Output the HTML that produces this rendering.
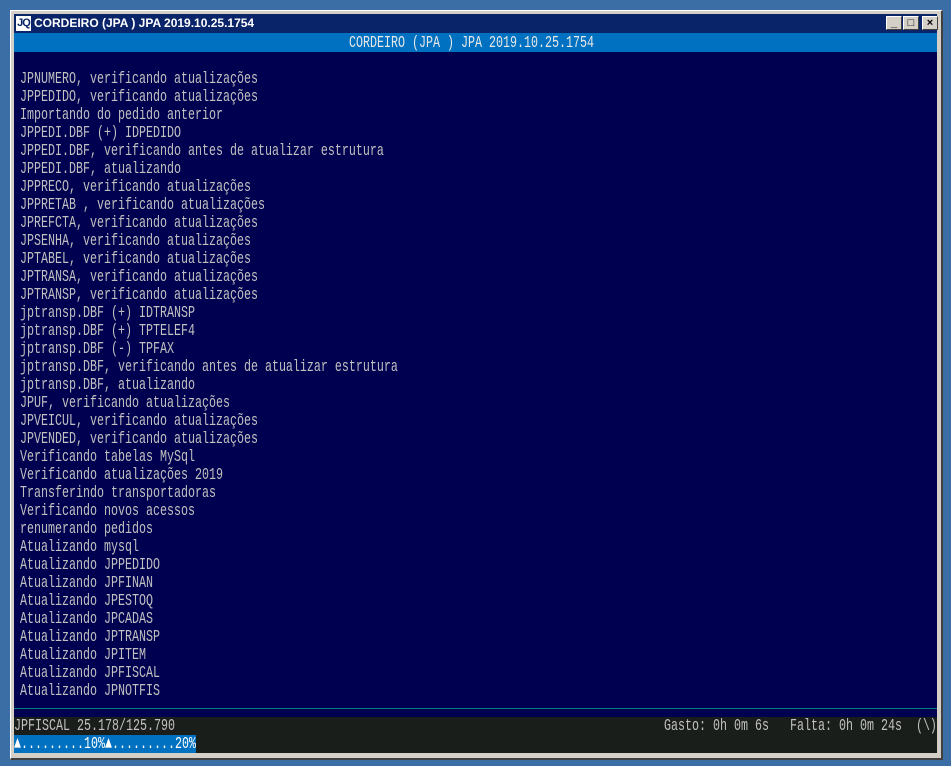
<!DOCTYPE html>
<html><head><meta charset="utf-8"><style>
*{margin:0;padding:0;box-sizing:border-box}
body{width:951px;height:766px;background:#3a6ea5;position:relative;overflow:hidden;font-family:"Liberation Mono",monospace}
.win{position:absolute;left:10px;top:10px;width:933px;height:750px;background:#d4d0c8;border-top:1px solid #fff;border-left:1px solid #fff;border-right:2px solid #404040;border-bottom:2px solid #404040}
.title{position:absolute;left:14px;top:14px;width:923px;height:19px;background:#0a246a;color:#fff;font:bold 12px "Liberation Sans",sans-serif;line-height:19px}
.logo{position:absolute;left:2px;top:2px;width:15px;height:15px;background:#fff;color:#0a246a;font:bold 11px "Liberation Sans",sans-serif;line-height:15px;text-align:center;letter-spacing:-1px}
.tt{position:absolute;left:20px;top:0}
.btn{position:absolute;top:2px;width:16px;height:14px;background:#d4d0c8;border-top:1px solid #fff;border-left:1px solid #fff;border-right:1px solid #404040;border-bottom:1px solid #404040;color:#000;font:bold 11px "Liberation Sans",sans-serif;text-align:center;line-height:12px}
.hdr{position:absolute;left:14px;top:33px;width:923px;height:19px;background:#0070c0;color:#e0e0e0;text-align:center}
.main{position:absolute;left:14px;top:52px;width:923px;height:665px;background:#000050}
.line{position:absolute;left:0;top:656px;width:923px;height:1px;background:#008080}
.t{white-space:pre;color:#c0c0c0;font-size:17px;line-height:18px;transform:scaleX(0.686);transform-origin:0 0;display:block}
.txt{position:absolute;left:20px;top:71px}
.st{position:absolute;left:14px;top:717px;width:923px;height:36px;background:#1a1e1a}
.prog{position:absolute;left:0;top:18px;width:182px;height:18px;background:#0070c0}
</style></head><body>
<div class="win"></div>
<div class="title"><div class="logo">JQ</div><span class="tt">CORDEIRO (JPA ) JPA 2019.10.25.1754</span>
<div class="btn" style="left:872px">_</div><div class="btn" style="left:889px">□</div><div class="btn" style="left:906px;margin-left:2px">×</div></div>
<div class="hdr"><span class="t" style="position:absolute;left:335px;top:2px;color:#e8e8e8">CORDEIRO (JPA ) JPA 2019.10.25.1754</span></div>
<div class="main"><div class="line"></div></div>
<div class="txt"><span class="t">JPNUMERO, verificando atualizações
JPPEDIDO, verificando atualizações
Importando do pedido anterior
JPPEDI.DBF (+) IDPEDIDO
JPPEDI.DBF, verificando antes de atualizar estrutura
JPPEDI.DBF, atualizando
JPPRECO, verificando atualizações
JPPRETAB , verificando atualizações
JPREFCTA, verificando atualizações
JPSENHA, verificando atualizações
JPTABEL, verificando atualizações
JPTRANSA, verificando atualizações
JPTRANSP, verificando atualizações
jptransp.DBF (+) IDTRANSP
jptransp.DBF (+) TPTELEF4
jptransp.DBF (-) TPFAX
jptransp.DBF, verificando antes de atualizar estrutura
jptransp.DBF, atualizando
JPUF, verificando atualizações
JPVEICUL, verificando atualizações
JPVENDED, verificando atualizações
Verificando tabelas MySql
Verificando atualizações 2019
Transferindo transportadoras
Verificando novos acessos
renumerando pedidos
Atualizando mysql
Atualizando JPPEDIDO
Atualizando JPFINAN
Atualizando JPESTOQ
Atualizando JPCADAS
Atualizando JPTRANSP
Atualizando JPITEM
Atualizando JPFISCAL
Atualizando JPNOTFIS</span></div>
<div class="st"><div class="prog"></div>
<span class="t" style="position:absolute;left:0;top:1px">JPFISCAL 25.178/125.790</span>
<span class="t" style="position:absolute;left:650px;top:1px">Gasto: 0h 0m 6s   Falta: 0h 0m 24s  (\)</span>
<span class="t" style="position:absolute;left:0;top:19px;color:#fff">▲.........10%▲.........20%</span>
</div>
</body></html>
